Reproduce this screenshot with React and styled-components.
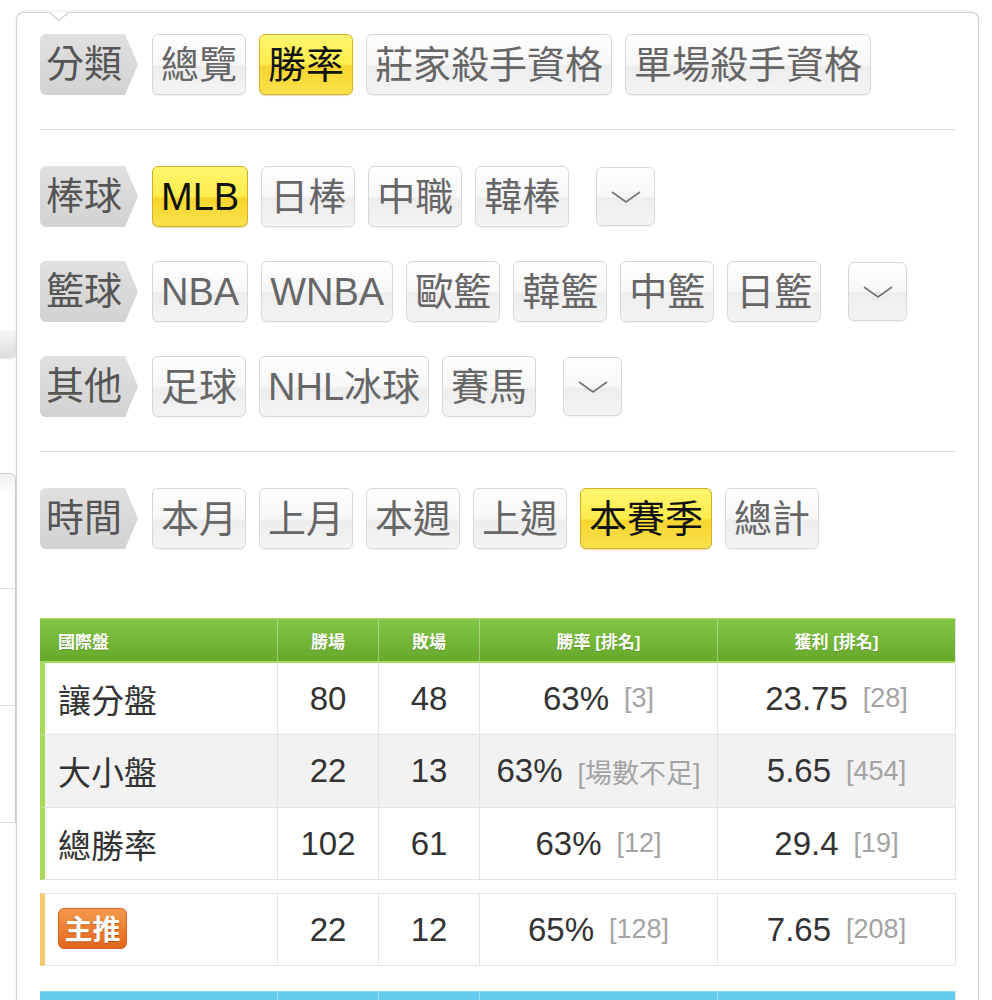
import React from 'react'
import styled, { createGlobalStyle } from 'styled-components'

const GlobalStyle = createGlobalStyle`
  html, body {
    margin: 0;
    padding: 0;
    background: #fff;
  }
  body {
    font-family: "Liberation Sans", "Noto Sans CJK TC", sans-serif;
    color: #333;
  }
`

const Page = styled.div`
  display: flex;
  align-items: flex-start;
  width: 992px;
  min-height: 1000px;
`

// faint page content visible behind the popover on the left
const Backdrop = styled.div`
  flex: none;
  width: 16px;
  display: flex;
  flex-direction: column;
`

const BackTab = styled.div`
  margin-top: 330px;
  height: 28px;
  background: linear-gradient(#f7f7f7, #dcdcdc);
  border-radius: 0 0 6px 0;
  box-shadow: 1px 1px 2px rgba(0, 0, 0, .12);
`

const BackList = styled.div`
  margin-top: 115px;
  border-top: 1px solid #d2d2d2;
  border-right: 1px solid #d2d2d2;
  border-radius: 0 6px 0 0;
  background: linear-gradient(#f1f1f1 0, #fafafa 16px, #fff 17px);
`

const BackItem = styled.div`
  height: ${p => p.$h}px;
  border-bottom: 1px solid #dedede;
`

const Panel = styled.div`
  position: relative;
  flex: none;
  box-sizing: border-box;
  width: 963px;
  margin-top: 12px;
  padding: 21px 22px 0 23px;
  background: #fff;
  border: 1px solid #cfcfcf;
  border-bottom: none;
  border-radius: 8px 8px 0 0;
  box-shadow: 0 -1px 3px rgba(0, 0, 0, .08);
`

const Caret = styled.svg`
  position: absolute;
  top: -1px;
  left: 33px;
`

const Section = styled.div`
  display: flex;
  flex-direction: column;
  gap: 34px;
  padding-bottom: ${p => p.$last ? 0 : 34}px;
  margin-bottom: ${p => p.$last ? 69 : 36}px;
  border-bottom: ${p => p.$last ? 'none' : '1px solid #dcdcdc'};
`

const FilterRow = styled.div`
  display: flex;
  align-items: center;
  gap: 13px;
  height: 61px;
`

const GroupLabel = styled.div`
  flex: none;
  box-sizing: border-box;
  width: 98px;
  height: 61px;
  margin-right: 1px;
  padding: 0 0 2px 6px;
  display: flex;
  align-items: center;
  font-size: 38px;
  line-height: 1;
  color: #555;
  background: linear-gradient(#e0e0e0, #d2d2d2);
  border-radius: 6px 0 0 6px;
  clip-path: polygon(0 0, 85px 0, 98px 50%, 85px 100%, 0 100%);
`

const Chip = styled.button`
  flex: none;
  box-sizing: border-box;
  height: 61px;
  padding: 0 8px;
  display: inline-flex;
  align-items: center;
  justify-content: center;
  font-family: inherit;
  font-size: 38px;
  line-height: 1;
  color: ${p => p.$active ? '#111' : '#666'};
  border: 1px solid ${p => p.$active ? '#d3ae26' : '#d8d8d8'};
  border-radius: 6px;
  background: ${p => p.$active
    ? 'linear-gradient(#fff66e 0%, #ffec4c 50%, #f6d52e 53%, #fae24c 100%)'
    : 'linear-gradient(#fefefe 0%, #f7f7f7 50%, #ededed 53%, #f4f4f4 100%)'};
  box-shadow: ${p => p.$active ? '0 1px 1px rgba(160, 120, 0, .25)' : '0 1px 1px rgba(0, 0, 0, .05)'};
  cursor: pointer;
`

const MoreButton = styled(Chip)`
  width: 59px;
  height: 59px;
  padding: 0;
  margin-left: 14px;
`

const Table = styled.div`
  border-right: 1px solid #e3e3e3;
  margin-bottom: ${p => p.$gap}px;
`

const HeadRow = styled.div`
  display: grid;
  grid-template-columns: 237px 101px 101px 238px 1fr;
  height: 45px;
  box-sizing: border-box;
  background: ${p => p.$blue
    ? 'linear-gradient(#63cdee, #4fbfe4)'
    : 'linear-gradient(#82c646, #66a92b)'};
  border-top: 1px solid ${p => p.$blue ? '#8ddcf4' : '#a9dd66'};
  border-bottom: 2px solid ${p => p.$blue ? '#8ddcf4' : '#a6dc5e'};
`

const HeadCell = styled.div`
  display: flex;
  align-items: center;
  justify-content: ${p => p.$left ? 'flex-start' : 'center'};
  padding-left: ${p => p.$left ? 18 : 0}px;
  font-size: 17px;
  font-weight: bold;
  color: #fff;
  text-shadow: 0 1px 1px rgba(0, 0, 0, .15);
  border-left: ${p => p.$left ? 'none' : '1px solid rgba(255, 255, 255, .35)'};
`

const BodyRow = styled.div`
  display: grid;
  grid-template-columns: 232px 101px 101px 238px 1fr;
  box-sizing: border-box;
  height: ${p => p.$h || 72}px;
  background: ${p => p.$shade ? '#f2f2f2' : '#fff'};
  border-left: 5px solid ${p => p.$accent};
  border-bottom: 1px solid #e3e3e3;
  border-top: ${p => p.$top ? '1px solid #e3e3e3' : 'none'};
`

const Cell = styled.div`
  display: flex;
  align-items: center;
  justify-content: ${p => p.$left ? 'flex-start' : 'center'};
  padding-left: ${p => p.$left ? 13 : 0}px;
  font-size: 33px;
  color: #333;
  white-space: nowrap;
  border-left: ${p => p.$left ? 'none' : '1px solid #e3e3e3'};
`

const Rank = styled.span`
  margin-left: 15px;
  font-size: 27px;
  color: #a3a3a3;
`

const Badge = styled.span`
  display: inline-flex;
  align-items: center;
  justify-content: center;
  box-sizing: border-box;
  width: 69px;
  height: 41px;
  margin-bottom: 3px;
  font-size: 28px;
  font-weight: bold;
  color: #fff;
  text-shadow: 0 1px 1px rgba(120, 40, 0, .45);
  background: linear-gradient(#f59a4c, #e2661d);
  border: 1px solid #d9621c;
  border-radius: 6px;
`

const Chevron = () => (
  <svg width="30" height="14" viewBox="0 0 30 14">
    <polyline points="1,2 15,12 29,2" fill="none" stroke="#777" strokeWidth="1.8" />
  </svg>
)

const groups = [
  [
    { label: '分類', items: ['總覽', '勝率', '莊家殺手資格', '單場殺手資格'], active: '勝率' },
  ],
  [
    { label: '棒球', items: ['MLB', '日棒', '中職', '韓棒'], active: 'MLB', more: true },
    { label: '籃球', items: ['NBA', 'WNBA', '歐籃', '韓籃', '中籃', '日籃'], more: true },
    { label: '其他', items: ['足球', 'NHL冰球', '賽馬'], more: true },
  ],
  [
    { label: '時間', items: ['本月', '上月', '本週', '上週', '本賽季', '總計'], active: '本賽季' },
  ],
]

const stats = [
  { name: '讓分盤', win: 80, lose: 48, rate: '63%', rateRank: '[3]', profit: '23.75', profitRank: '[28]' },
  { name: '大小盤', win: 22, lose: 13, rate: '63%', rateRank: '[場數不足]', profit: '5.65', profitRank: '[454]', shade: true },
  { name: '總勝率', win: 102, lose: 61, rate: '63%', rateRank: '[12]', profit: '29.4', profitRank: '[19]' },
]

export default function App() {
  return (
    <>
      <GlobalStyle />
      <Page>
        <Backdrop>
          <BackTab />
          <BackList>
            <BackItem $h={114} />
            <BackItem $h={116} />
            <BackItem $h={116} />
          </BackList>
        </Backdrop>

        <Panel>
          <Caret width="18" height="10" viewBox="0 0 18 10">
            <path d="M0 0 L9 8 L18 0 Z" fill="#fff" />
            <polyline points="0,1 9,8.5 18,1" fill="none" stroke="#cfcfcf" strokeWidth="1.2" />
          </Caret>

          {groups.map((rows, gi) => (
            <Section key={gi} $last={gi === groups.length - 1}>
              {rows.map(row => (
                <FilterRow key={row.label}>
                  <GroupLabel>{row.label}</GroupLabel>
                  {row.items.map(item => (
                    <Chip key={item} $active={item === row.active}>{item}</Chip>
                  ))}
                  {row.more && <MoreButton><Chevron /></MoreButton>}
                </FilterRow>
              ))}
            </Section>
          ))}

          <Table $gap={13}>
            <HeadRow>
              <HeadCell $left>國際盤</HeadCell>
              <HeadCell>勝場</HeadCell>
              <HeadCell>敗場</HeadCell>
              <HeadCell>勝率 [排名]</HeadCell>
              <HeadCell>獲利 [排名]</HeadCell>
            </HeadRow>
            {stats.map(s => (
              <BodyRow key={s.name} $accent="#a6da58" $shade={s.shade} $h={s.shade ? 73 : 72}>
                <Cell $left>{s.name}</Cell>
                <Cell>{s.win}</Cell>
                <Cell>{s.lose}</Cell>
                <Cell>{s.rate}<Rank>{s.rateRank}</Rank></Cell>
                <Cell>{s.profit}<Rank>{s.profitRank}</Rank></Cell>
              </BodyRow>
            ))}
          </Table>

          <Table $gap={25}>
            <BodyRow $accent="#f6c76c" $top $h={73}>
              <Cell $left><Badge>主推</Badge></Cell>
              <Cell>22</Cell>
              <Cell>12</Cell>
              <Cell>65%<Rank>[128]</Rank></Cell>
              <Cell>7.65<Rank>[208]</Rank></Cell>
            </BodyRow>
          </Table>

          <Table $gap={0}>
            <HeadRow $blue>
              <HeadCell $left />
              <HeadCell />
              <HeadCell />
              <HeadCell />
              <HeadCell />
            </HeadRow>
          </Table>
        </Panel>
      </Page>
    </>
  )
}
